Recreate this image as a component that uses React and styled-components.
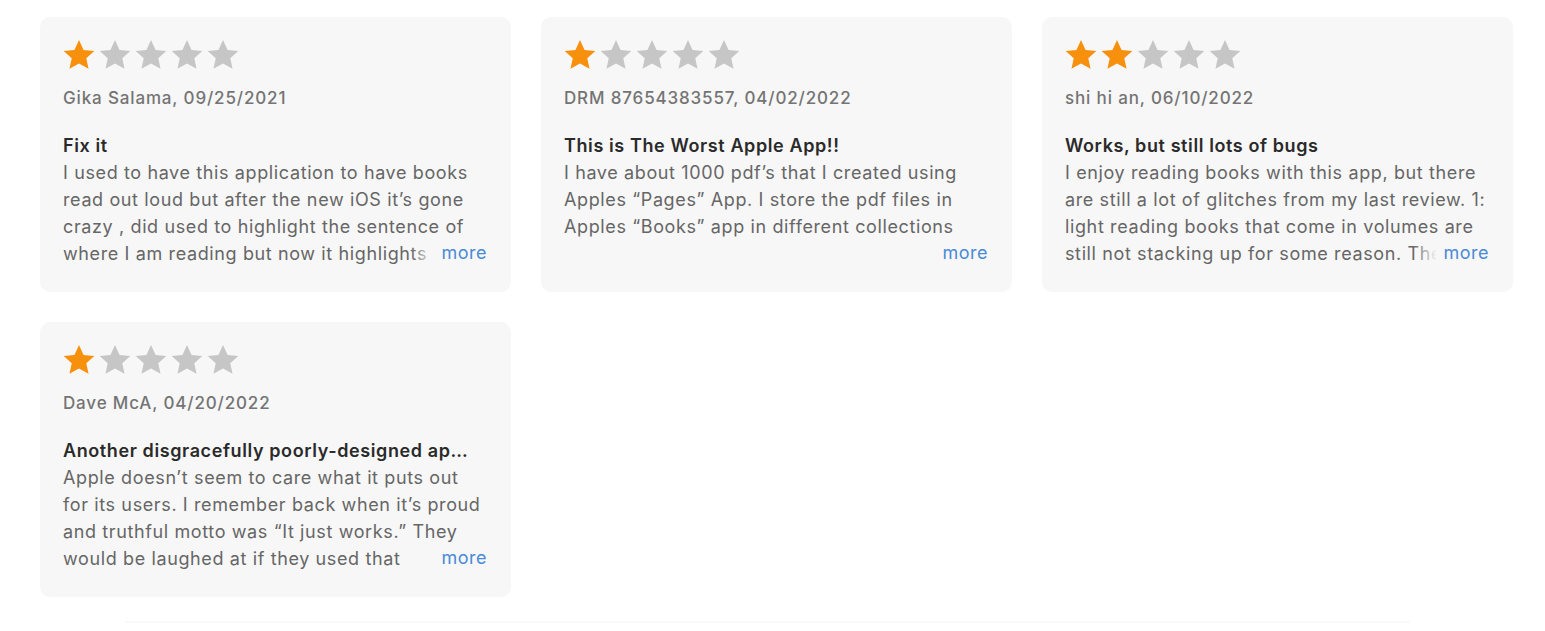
import React from "react";
import styled, { createGlobalStyle } from "styled-components";

const Global = createGlobalStyle`
  html, body { margin: 0; padding: 0; background: #ffffff; }
  body { font-family: Inter, "Noto Sans", "Liberation Sans", sans-serif; -webkit-font-smoothing: antialiased; }
`;

const Page = styled.main`
  padding: 17px 0 0 40px;
  width: 1545px;
  box-sizing: border-box;
`;

const Grid = styled.section`
  display: grid;
  grid-template-columns: repeat(3, 471px);
  column-gap: 30px;
  row-gap: 30px;
`;

const Card = styled.article`
  background: #f7f7f7;
  border-radius: 10px;
  padding: 21px 24px 26px 23px;
  display: flex;
  flex-direction: column;
  box-sizing: border-box;
  height: 275px;
`;

const Stars = styled.div`
  display: flex;
  height: 32px;
  gap: 2px;
  margin-left: -1px;
  margin-top: 1px;
`;

const Author = styled.div`
  margin-top: 14px;
  font-size: 17px;
  line-height: 27px;
  font-weight: 500;
  letter-spacing: 0.85px;
  color: #747474;
`;

const Title = styled.h3`
  margin: 20px 0 0 0;
  font-size: 18px;
  line-height: 27px;
  font-weight: 600;
  letter-spacing: 0.6px;
  color: #2a2a2a;
  white-space: nowrap;
  overflow: hidden;
  text-overflow: ellipsis;
  padding-right: 10px;
`;

const BodyWrap = styled.div`
  position: relative;
  height: 108px;
  overflow: hidden;
`;

const Body = styled.p`
  margin: 0;
  font-size: 18px;
  line-height: 27px;
  letter-spacing: 0.62px;
  color: #666666;
  white-space: pre-line;
`;

const More = styled.span`
  position: absolute;
  right: 0;
  bottom: 0;
  line-height: 27px;
  font-size: 18px;
  letter-spacing: 0.5px;
  color: #4a8ad6;
  padding-left: 30px;
  background: linear-gradient(to right, rgba(247,247,247,0) 0, #f7f7f7 24px);
`;

const Divider = styled.hr`
  border: 0;
  height: 2px;
  background: #fafafa;
  margin: 24px 0 0 85px;
  width: 1285px;
`;

const Star = ({ filled }) => (
  <svg width="34" height="32" viewBox="0 0 24 23">
    <path
      d="M12 0.8l3.27 7.05 7.73.8-5.78 5.2 1.64 7.6L12 17.6l-6.86 3.85 1.64-7.6L1 8.65l7.73-.8z"
      fill={filled ? "#f7900d" : "#c6c6c6"}
    />
  </svg>
);

const reviews = [
  {
    rating: 1,
    author: "Gika Salama, 09/25/2021",
    title: "Fix it",
    body:
      "I used to have this application to have books read out loud but after the new iOS it’s gone crazy , did used to highlight the sentence of where I am reading but now it highlights random sentences and keeps jumping around.",
  },
  {
    rating: 1,
    author: "DRM 87654383557, 04/02/2022",
    title: "This is The Worst Apple App!!",
    body:
      "I have about 1000 pdf’s that I created using Apples “Pages” App. I store the pdf files in Apples “Books” app in different collections\n\nNow the app is broken.",
  },
  {
    rating: 2,
    author: "shi hi an, 06/10/2022",
    title: "Works, but still lots of bugs",
    body:
      "I enjoy reading books with this app, but there are still a lot of glitches from my last review. 1: light reading books that come in volumes are still not stacking up for some reason. The series view is broken.",
  },
  {
    rating: 1,
    author: "Dave McA, 04/20/2022",
    title: "Another disgracefully poorly-designed app from Apple",
    body:
      "Apple doesn’t seem to care what it puts out for its users. I remember back when it’s proud and truthful motto was “It just works.” They would be laughed at if they used that\nmotto today.",
  },
];

export default function App() {
  return (
    <>
      <Global />
      <Page>
        <Grid>
          {reviews.map((r, i) => (
            <Card key={i}>
              <Stars>
                {[0, 1, 2, 3, 4].map((s) => (
                  <Star key={s} filled={s < r.rating} />
                ))}
              </Stars>
              <Author>{r.author}</Author>
              <Title>{r.title}</Title>
              <BodyWrap>
                <Body>{r.body}</Body>
                <More>more</More>
              </BodyWrap>
            </Card>
          ))}
        </Grid>
        <Divider />
      </Page>
    </>
  );
}
